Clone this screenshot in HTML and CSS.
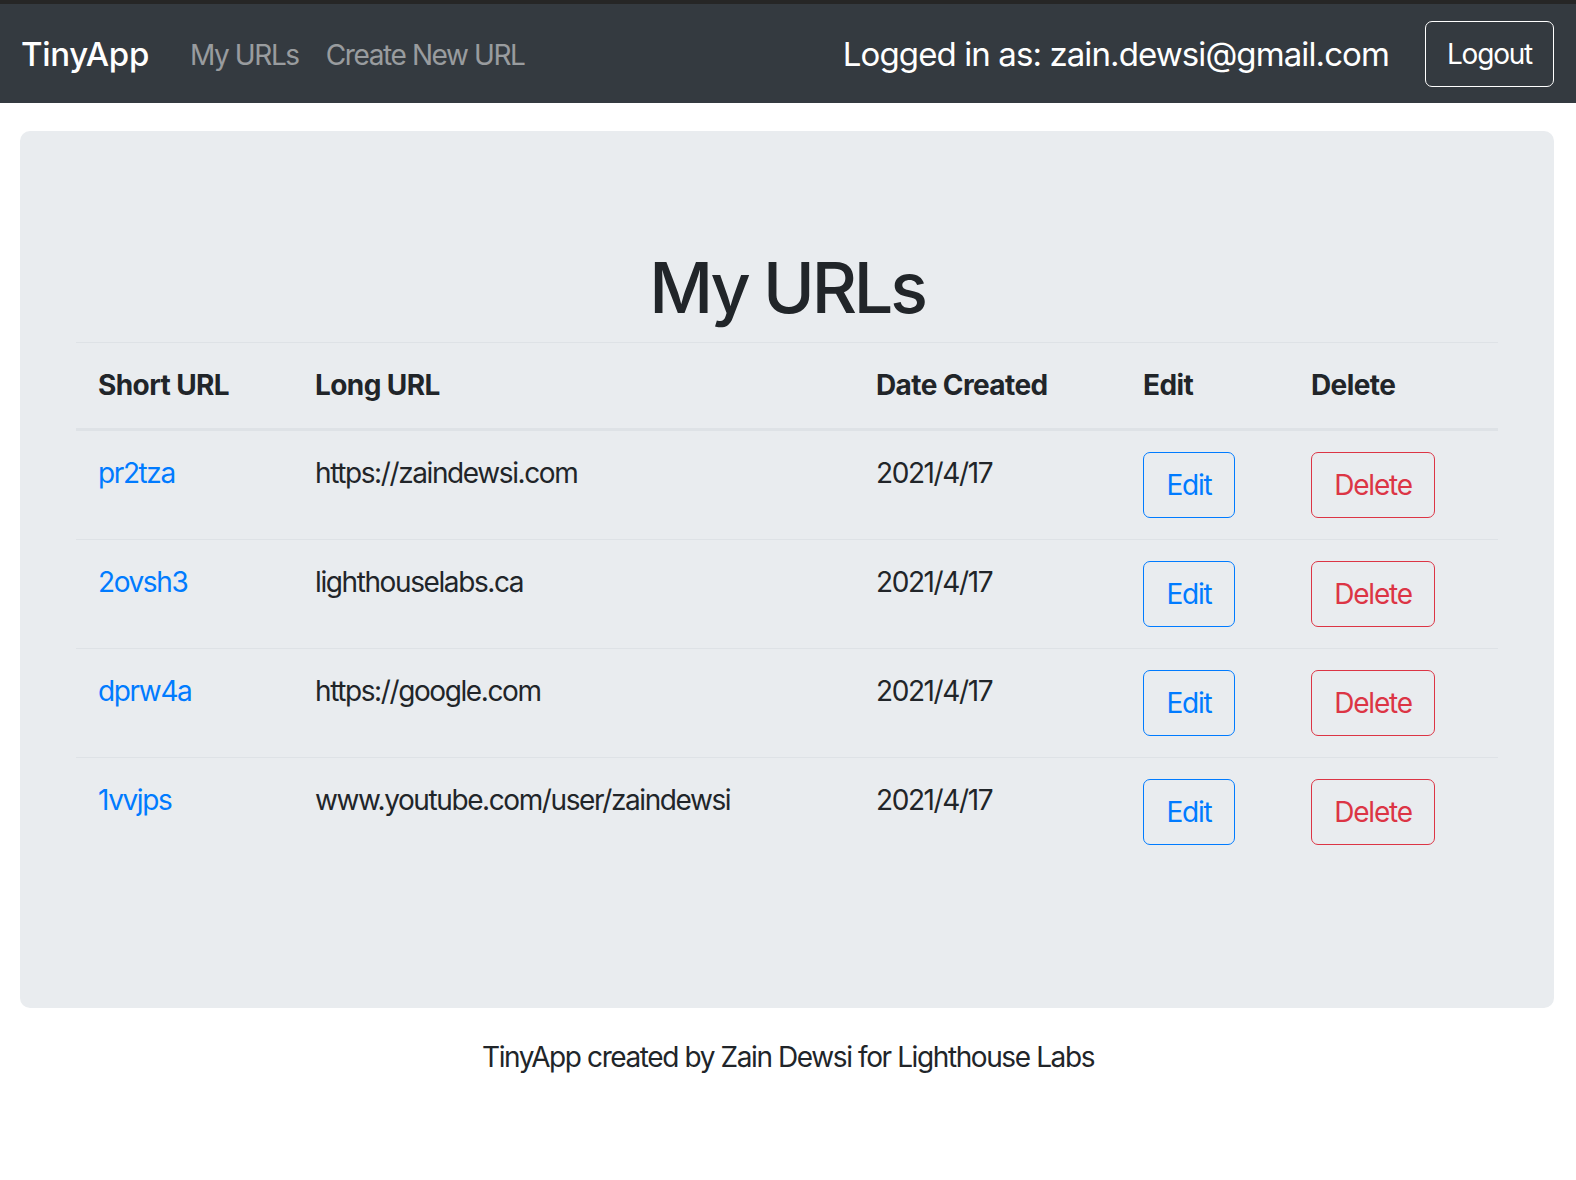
FILE: index.html
```html
<!DOCTYPE html>
<html lang="en">
<head>
<meta charset="utf-8">
<title>TinyApp</title>
<link rel="stylesheet" href="styles.css">
</head>
<body>
<nav class="navbar">
  <a class="brand" href="#">TinyApp</a>
  <div class="nav-links">
    <a class="nav-link" href="#">My URLs</a>
    <a class="nav-link" href="#">Create New URL</a>
  </div>
  <div class="nav-right">
    <span class="logged">Logged in as: zain.dewsi@gmail.com</span>
    <button class="btn btn-logout">Logout</button>
  </div>
</nav>
<main class="jumbotron">
  <h1 class="title">My URLs</h1>
  <table class="table">
    <thead>
      <tr>
        <th class="c-short">Short URL</th>
        <th class="c-long">Long URL</th>
        <th class="c-date">Date Created</th>
        <th class="c-edit">Edit</th>
        <th class="c-del">Delete</th>
      </tr>
    </thead>
    <tbody>
      <tr>
        <td><a href="#">pr2tza</a></td>
        <td>https://zaindewsi.com</td>
        <td>2021/4/17</td>
        <td><button class="btn btn-edit">Edit</button></td>
        <td><button class="btn btn-delete">Delete</button></td>
      </tr>
      <tr>
        <td><a href="#">2ovsh3</a></td>
        <td>lighthouselabs.ca</td>
        <td>2021/4/17</td>
        <td><button class="btn btn-edit">Edit</button></td>
        <td><button class="btn btn-delete">Delete</button></td>
      </tr>
      <tr>
        <td><a href="#">dprw4a</a></td>
        <td>https://google.com</td>
        <td>2021/4/17</td>
        <td><button class="btn btn-edit">Edit</button></td>
        <td><button class="btn btn-delete">Delete</button></td>
      </tr>
      <tr>
        <td><a href="#">1vvjps</a></td>
        <td>www.youtube.com/user/zaindewsi</td>
        <td>2021/4/17</td>
        <td><button class="btn btn-edit">Edit</button></td>
        <td><button class="btn btn-delete">Delete</button></td>
      </tr>
    </tbody>
  </table>
</main>
<footer class="footer">TinyApp created by Zain Dewsi for Lighthouse Labs</footer>
</body>
</html>
```
FILE: styles.css
```css
* { box-sizing: border-box; }
html, body { margin: 0; padding: 0; }
body {
  font-family: Inter, "Noto Sans", "Liberation Sans", sans-serif;
  font-size: 28px;
  line-height: 1.5;
  letter-spacing: -1.4px;
  color: #212529;
  background: #fff;
}
a { text-decoration: none; }

.navbar {
  display: flex;
  align-items: center;
  height: 103px;
  border-top: 4px solid #262626;
  background: #343a40;
  padding: 2px 22px 0 21px;
}
.brand {
  color: #fff;
  font-size: 33px;
  font-weight: 500;
  letter-spacing: -0.3px;
}
.nav-links {
  display: flex;
  gap: 27px;
  margin-left: 41px;
}
.nav-link {
  color: rgba(255,255,255,0.5);
  font-size: 28px;
  letter-spacing: -1.4px;
}
.nav-right {
  margin-left: auto;
  display: flex;
  align-items: center;
  gap: 36px;
}
.logged {
  color: #fff;
  font-size: 33px;
  letter-spacing: -0.9px;
}
.btn {
  font-family: inherit;
  font-size: 28px;
  line-height: 1.5;
  letter-spacing: -1.2px;
  background: transparent;
  border: 1px solid;
  border-radius: 7px;
  height: 66px;
  padding: 0;
  cursor: pointer;
}
.btn-logout {
  color: #fff;
  border-color: #fff;
  width: 129px;
  margin-top: -2px;
}
.btn-edit {
  color: #007bff;
  border-color: #007bff;
  width: 92px;
}
.btn-delete {
  color: #dc3545;
  border-color: #dc3545;
  width: 124px;
}

.jumbotron {
  margin: 28px 22px 0 20px;
  background: #e9ecef;
  border-radius: 10px;
  padding: 115px 56px 142px;
}
.title {
  margin: 0 0 12px;
  text-align: center;
  font-size: 70px;
  font-weight: 500;
  line-height: 1.2;
  letter-spacing: -3.2px;
}
.table {
  width: 100%;
  border-collapse: collapse;
  border-top: 1px solid #dee2e6;
}
.table th, .table td {
  text-align: left;
  vertical-align: top;
  padding: 21px 22px 21px;
  line-height: 1.5;
}
.table th {
  font-weight: 700;
  letter-spacing: -0.6px;
  border-bottom: 3px solid #dee2e6;
  padding-top: 21px;
  padding-bottom: 22px;
}
.table td {
  border-top: 1px solid #dee2e6;
}
.table tbody tr:first-child td { border-top: none; }
.table td a { color: #007bff; }
.c-short { width: 217px; }
.c-long { width: 561px; }
.c-date { width: 267px; }
.c-edit { width: 168px; }

.footer {
  text-align: center;
  padding-top: 28px;
  font-size: 28px;
}
```
